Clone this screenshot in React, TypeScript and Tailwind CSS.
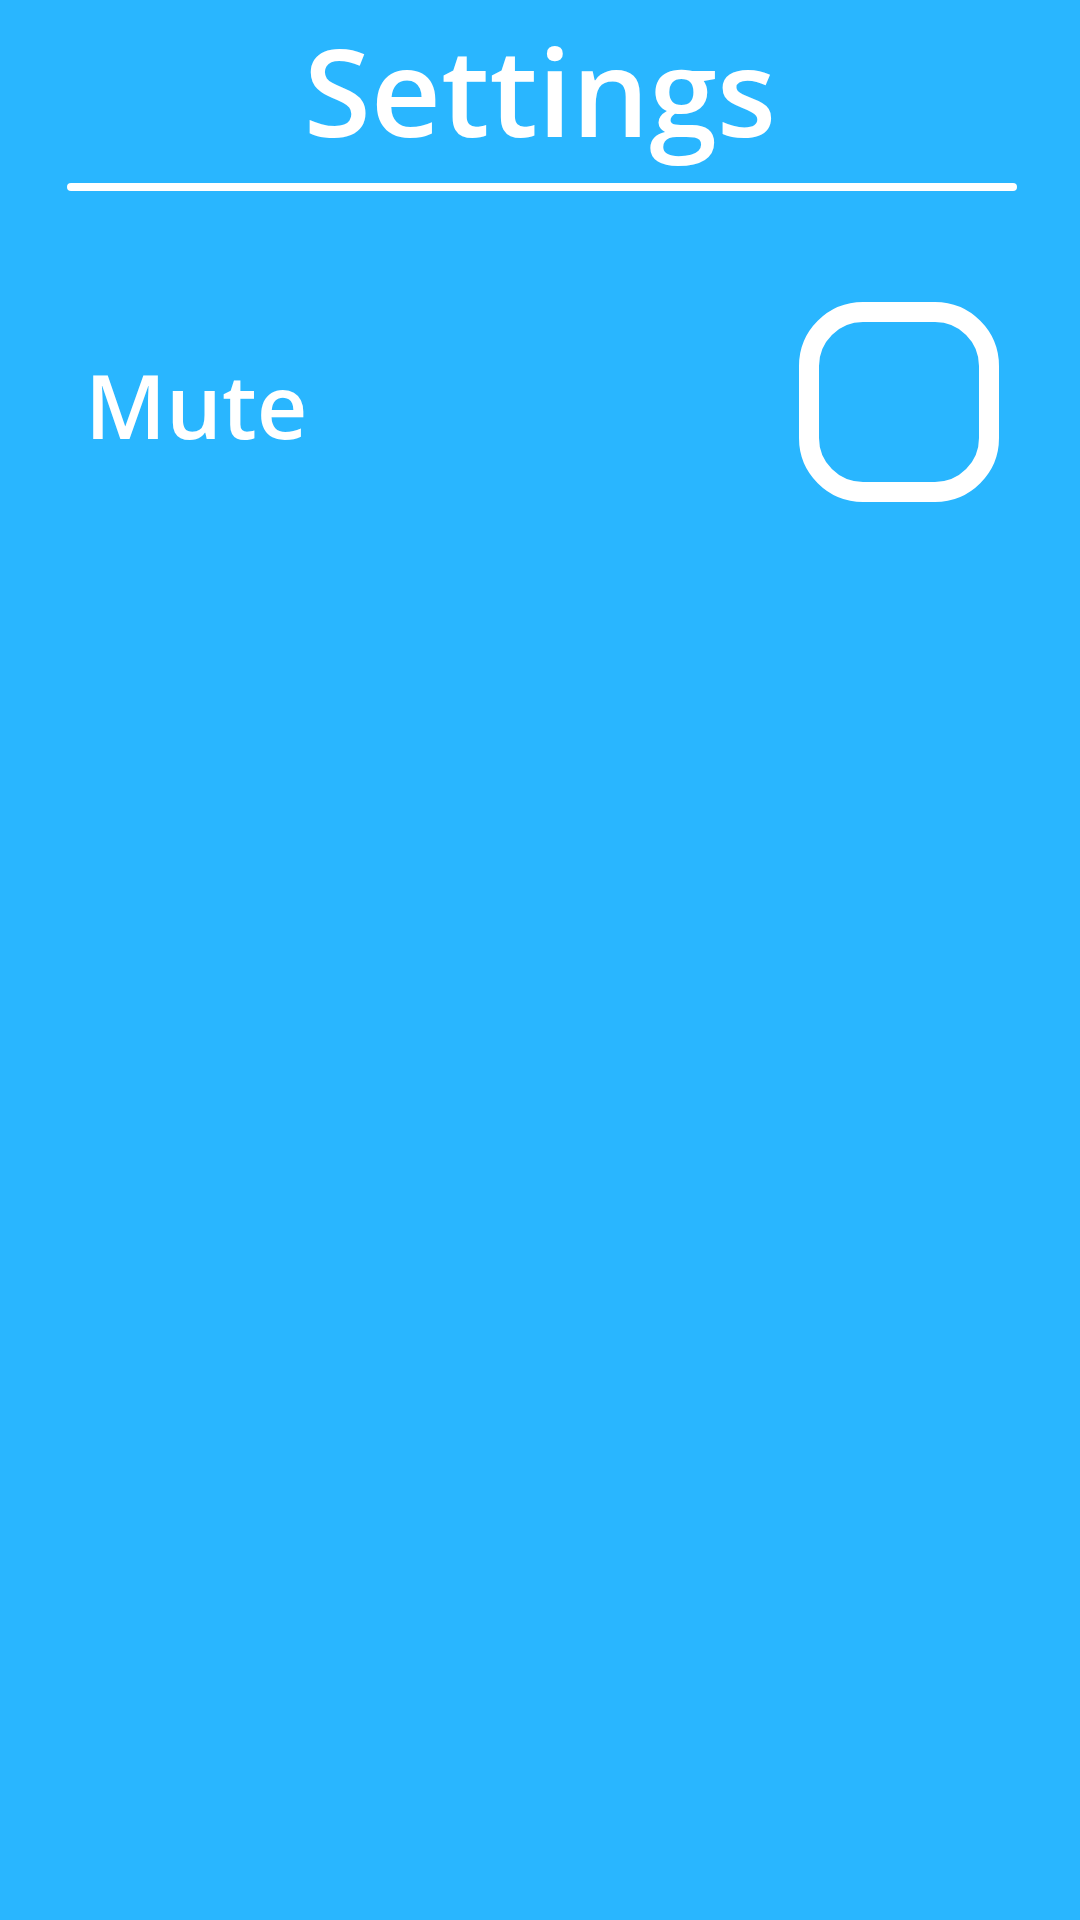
import { useState } from "react";

export default function App() {
  const [muted, setMuted] = useState(false);

  return (
    <div className="flex min-h-[1920px] w-[1080px] flex-col bg-[#29b6ff] font-['Open_Sans',sans-serif] text-white">
      <h1 className="pt-[15px] text-center text-[122px] font-semibold leading-[150px]">
        Settings
      </h1>

      <div className="ml-[67px] mr-[63px] mt-[18px] h-[8px] rounded-full bg-white" />

      <div className="mt-[111px] flex items-center justify-between pl-[85px] pr-[81px]">
        <span className="pt-[6px] text-[88px] font-semibold leading-none">Mute</span>
        <button
          type="button"
          aria-pressed={muted}
          onClick={() => setMuted((m) => !m)}
          className="h-[200px] w-[200px] rounded-[64px] border-[20px] border-white"
        />
      </div>
    </div>
  );
}
